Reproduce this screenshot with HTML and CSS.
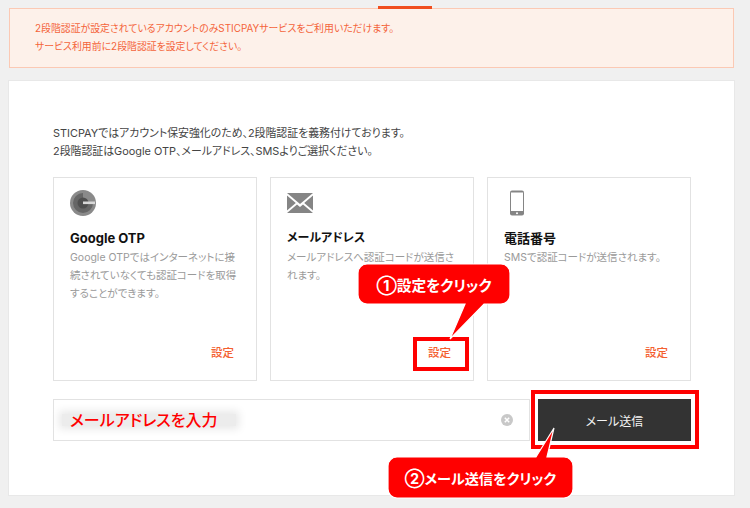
FILE: index.html
```html
<!DOCTYPE html>
<html lang="ja">
<head>
    <meta charset="UTF-8">
    <meta name="viewport" content="width=device-width, initial-scale=1.0">
    <title>2段階認証</title>
    <link rel="stylesheet" href="styles.css">
</head>
<body>
    <div class="tab-mark"></div>

    <div class="notice">
        <p>2段階認証が設定されているアカウントのみSTICPAYサービスをご利用いただけます。</p>
        <p>サービス利用前に2段階認証を設定してください。</p>
    </div>

    <div class="panel">
        <div class="intro">
            <p>STICPAYではアカウント保安強化のため、2段階認証を義務付けております。</p>
            <p>2段階認証はGoogle OTP、メールアドレス、SMSよりご選択ください。</p>
        </div>

        <div class="cards">
            <div class="card">
                <svg class="card-icon" viewBox="0 0 26 26" xmlns="http://www.w3.org/2000/svg">
                    <circle cx="13" cy="13" r="13" fill="#8a8a8a"/>
                    <path d="M13 3a10 10 0 1 0 10 10h-5a5 5 0 1 1-5-5z" fill="#666"/>
                    <circle cx="13" cy="13" r="5.5" fill="#4f4f4f"/>
                    <rect x="13" y="11.5" width="12" height="2.6" fill="#d8d8d8"/>
                </svg>
                <h3>Google OTP</h3>
                <p class="desc">Google OTPではインターネットに接続されていなくても認証コードを取得することができます。</p>
                <a class="set-link">設定</a>
            </div>
            <div class="card">
                <svg class="card-icon" viewBox="0 0 26 20" xmlns="http://www.w3.org/2000/svg">
                    <path d="M0 0h26L13 11z" fill="#858585"/>
                    <path d="M0 2.5v15L8.8 10zM26 2.5v15L17.2 10z" fill="#858585"/>
                    <path d="M0 20h26L16 11.5 13 14l-3-2.5z" fill="#858585"/>
                </svg>
                <h3 class="tight">メールアドレス</h3>
                <p class="desc">メールアドレスへ認証コードが送信されます。</p>
                <a class="set-link">設定</a>
            </div>
            <div class="card">
                <svg class="card-icon" viewBox="0 0 15 26" xmlns="http://www.w3.org/2000/svg">
                    <rect x="0.5" y="0.5" width="14" height="25" rx="2" fill="#858585"/>
                    <rect x="1.5" y="2.5" width="12" height="18.5" fill="#fff"/>
                    <circle cx="7.5" cy="23.3" r="1" fill="#fff"/>
                </svg>
                <h3>電話番号</h3>
                <p class="desc">SMSで認証コードが送信されます。</p>
                <a class="set-link">設定</a>
            </div>
        </div>

        <div class="send-row">
            <div class="email-input">
                <span class="email-hint">メールアドレスを入力</span>
                <svg class="clear-icon" viewBox="0 0 12 12" xmlns="http://www.w3.org/2000/svg">
                    <circle cx="6" cy="6" r="6" fill="#c8c8c8"/>
                    <path d="M3.8 3.8l4.4 4.4M8.2 3.8L3.8 8.2" stroke="#fff" stroke-width="1.5"/>
                </svg>
            </div>
            <button class="send-btn">メール送信</button>
        </div>
    </div>

    <!-- annotations on top of the screenshot -->
    <div class="mark mark-set"></div>
    <div class="mark mark-send"></div>
    <svg class="bubbles" viewBox="0 0 750 508" xmlns="http://www.w3.org/2000/svg">
        <path d="M367 264H501a9 9 0 0 1 9 9V295a9 9 0 0 1-9 9H484L450 339 465 304H367a9 9 0 0 1-9-9V273a9 9 0 0 1 9-9z"/>
        <path d="M397 457H536L554 428 547 457H564a9 9 0 0 1 9 9V489a9 9 0 0 1-9 9H397a9 9 0 0 1-9-9V466a9 9 0 0 1 9-9z"/>
    </svg>
    <div class="callout callout-set">①設定をクリック</div>
    <div class="callout callout-send">②メール送信をクリック</div>
</body>
</html>
```

FILE: styles.css
```css
body {
    font-family: Inter, "Noto Sans CJK JP", sans-serif;
    font-feature-settings: "palt";
    margin: 0;
    padding: 8px 16px 0 9px;
    height: 508px;
    box-sizing: border-box;
    background-color: #f0f0f0;
    overflow: hidden;
    position: relative;
}

p {
    margin: 0;
}

.tab-mark {
    position: absolute;
    top: 6px;
    left: 378px;
    width: 54px;
    height: 3px;
    background-color: #f04e1e;
}

.notice {
    height: 60px;
    box-sizing: border-box;
    padding: 11px 25px 0;
    background-color: #fdf1ea;
    border: 1px solid #fbc9b4;
    color: #f4643a;
    font-size: 9.9px;
    line-height: 17.5px;
}

.panel {
    margin-top: 13px;
    height: 414px;
    box-sizing: border-box;
    padding: 43px 43px 0 44px;
    background-color: #fff;
    box-shadow: 0 0 0 1px #e8e8e8;
}

.intro {
    color: #444;
    font-size: 10.9px;
    line-height: 18px;
}

.cards {
    display: flex;
    gap: 13px;
    margin-top: 17px;
}

.card {
    flex: 1;
    height: 204px;
    box-sizing: border-box;
    padding: 12px 14px 0 16px;
    border: 1px solid #e2e2e2;
    position: relative;
}

.card-icon {
    display: block;
    width: 26px;
    height: 26px;
}

.card h3 {
    margin: 13px 0 0;
    color: #111;
    font-size: 13px;
    line-height: 18px;
    font-weight: 700;
}

.card h3.tight {
    font-size: 12px;
}

.desc {
    margin-top: 2px;
    color: #9a9a9a;
    font-size: 10.5px;
    line-height: 18px;
}

.set-link {
    position: absolute;
    right: 22px;
    bottom: 19px;
    color: #f4602f;
    font-size: 11.5px;
    line-height: 16px;
    font-weight: 500;
}

.send-row {
    display: flex;
    gap: 8px;
    margin-top: 18px;
}

.email-input {
    flex: 1;
    height: 42px;
    box-sizing: border-box;
    display: flex;
    align-items: center;
    justify-content: space-between;
    padding: 0 16px 0 8px;
    border: 1px solid #e2e2e2;
}

.email-hint {
    padding: 0 18px 0 8px;
    color: #f00;
    font-size: 16px;
    line-height: 12px;
    font-weight: 500;
    background-color: #ececec;
    box-shadow: 0 0 8px 3px #e8e8e8;
}

.clear-icon {
    width: 12px;
    height: 12px;
}

.send-btn {
    width: 153px;
    height: 42px;
    border: none;
    background-color: #333;
    color: #f4f4f4;
    font-family: inherit;
    font-feature-settings: inherit;
    font-size: 12px;
}

.mark {
    position: absolute;
    box-sizing: border-box;
    border: 4px solid #f00;
    z-index: 5;
}

.mark-set {
    left: 413px;
    top: 337px;
    width: 56px;
    height: 34px;
}

.mark-send {
    left: 531px;
    top: 390px;
    width: 168px;
    height: 59px;
}

.bubbles {
    position: absolute;
    top: 0;
    left: 0;
    width: 750px;
    height: 508px;
    z-index: 6;
    fill: #f00;
    stroke: #fff;
    stroke-width: 1.2;
}

.callout {
    position: absolute;
    display: flex;
    align-items: center;
    justify-content: center;
    color: #fff;
    font-weight: 700;
    z-index: 7;
}

.callout-set {
    left: 358px;
    top: 264px;
    width: 152px;
    height: 40px;
    font-size: 14.7px;
}

.callout-send {
    left: 388px;
    top: 457px;
    width: 185px;
    height: 41px;
    font-size: 14.2px;
}
```
